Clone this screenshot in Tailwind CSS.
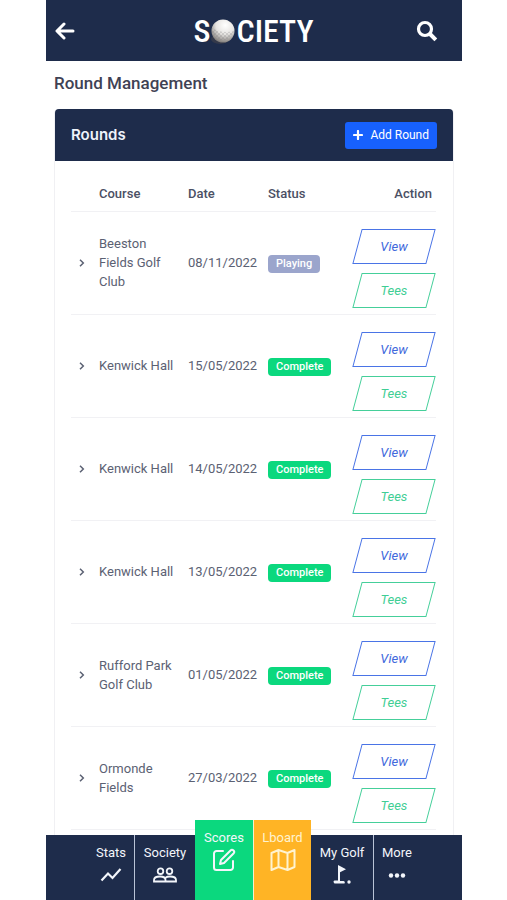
<!DOCTYPE html>
<html lang="en">
<head>
<meta charset="utf-8">
<meta name="viewport" content="width=device-width, initial-scale=1">
<title>Round Management</title>
<script src="https://cdn.jsdelivr.net/npm/@tailwindcss/browser@4"></script>
</head>
<body class="h-screen overflow-hidden bg-white pl-[46px] pr-[45px] font-[Roboto,sans-serif] text-[13px] text-[#5b6173]">
<div class="flex h-full flex-col">
  <header class="flex h-[61px] shrink-0 items-center justify-between bg-[#1e2c4b] pl-[9px] pr-6 text-white">
    <button type="button" aria-label="Back" class="w-9">
      <svg class="size-5" viewBox="0 0 20 20" fill="none" stroke="currentColor" stroke-width="3" stroke-linecap="round" stroke-linejoin="round"><path d="M9 3 2 10l7 7M2.500 10H18"/></svg>
    </button>
    <h1 class="flex items-center font-['Roboto_Condensed','Liberation_Sans_Narrow',sans-serif] text-[32px] leading-none font-medium">
      <span>S</span>
      <svg class="h-7 w-[26px]" viewBox="0 0 26 28" role="img" aria-label="O">
        <defs>
          <radialGradient id="ball" cx=".6" cy=".25" r=".8"><stop offset="0" stop-color="#fff"/><stop offset=".5" stop-color="#e6e4e1"/><stop offset="1" stop-color="#777370"/></radialGradient>
          <pattern id="dimples" width="4" height="4" patternUnits="userSpaceOnUse"><circle cx="1" cy="1" r=".8" fill="#77777a"/><circle cx="3" cy="3" r=".8" fill="#77777a"/></pattern>
        </defs>
        <ellipse cx="10" cy="22" rx="9" ry="5" fill="#34394a"/>
        <circle cx="13" cy="14" r="11.500" fill="url(#ball)"/>
        <path d="M2 11q10 6 22 3a11.500 11.500 0 0 1-22 2z" fill="url(#dimples)" opacity=".55"/>
      </svg>
      <span>CIETY</span>
    </h1>
    <button type="button" aria-label="Search" class="w-[22px]">
      <svg class="size-[22px]" viewBox="0 0 22 22" fill="none" stroke="currentColor" stroke-width="3.200"><circle cx="9" cy="9" r="6.500"/><path d="m13.500 13.500 6.300 6.300" stroke-width="4"/></svg>
    </button>
  </header>

  <main class="min-h-0 flex-1 overflow-y-auto px-2 [scrollbar-width:none]">
    <h2 class="pt-[10px] pb-[14px] text-[17px] leading-6 font-medium text-[#3f4254]">Round Management</h2>
    <section class="rounded border border-[#f0f0f3] pb-24">
      <div class="-mt-px flex h-[52px] items-center justify-between rounded-t bg-[#1e2c4b] px-4">
        <h3 class="font-[Inter,sans-serif] text-[15px] font-semibold text-[#eef3fb]">Rounds</h3>
        <button type="button" class="flex h-[27px] items-center gap-[7px] rounded-[3px] bg-[#1761fd] px-2 text-xs text-white">
          <svg class="size-[10px]" viewBox="0 0 10 10" stroke="currentColor" stroke-width="2.200" stroke-linecap="round"><path d="M5 1v8M1 5h8"/></svg>
          Add Round
        </button>
      </div>
      <div class="pl-4 pr-[17px]">
        <table class="w-full table-fixed text-left leading-[19px]">
          <colgroup><col class="w-7"><col class="w-[89px]"><col class="w-20"><col><col class="w-[84px]"></colgroup>
          <thead>
            <tr class="border-b border-[#f1f1f4] text-[#4b5064]">
              <td class="h-[50px]"></td>
              <th class="pt-4 font-medium">Course</th>
              <th class="pt-4 font-medium">Date</th>
              <th class="pt-4 font-medium">Status</th>
              <th class="pt-4 pr-1 text-right font-medium">Action</th>
            </tr>
          </thead>
          <tbody id="rounds"></tbody>
        </table>
      </div>
    </section>
  </main>

  <nav aria-label="Main" class="relative z-10 flex h-[65px] shrink-0 bg-[#1e2c4b] text-[#f3f6fb]">
    <a href="#" class="flex flex-1 justify-end pr-2 pt-2">
      <span class="flex flex-col items-center gap-1"><span class="leading-5">Stats</span>
      <svg class="h-4 w-[22px]" viewBox="0 0 22 16" fill="none" stroke="currentColor" stroke-width="2.200"><path d="m1.500 13.500 6.500-7 4.500 4.500 8-9"/></svg></span>
    </a>
    <a href="#" class="flex w-[61px] flex-col items-center gap-1 border-l border-[#b9c3d6] pt-2">
      <span class="leading-5">Society</span>
      <svg class="h-4 w-6" viewBox="0 0 24 16" fill="none" stroke="currentColor" stroke-width="1.800"><circle cx="7.500" cy="4.200" r="2.800"/><circle cx="16.500" cy="4.200" r="2.800"/><path d="M1 14.500V13c0-2.200 2.500-3.500 6-3.500s5.500 1.300 5.500 3.500v1.500zM12.500 14.500H23V13c0-2.200-2.500-3.500-6-3.500-2 0-3.500.4-4.500 1.200"/></svg>
    </a>
    <a href="#" class="-mt-[15px] flex w-[58px] flex-col items-center bg-[#0bd87e] pt-2">
      <span class="leading-5">Scores</span>
      <svg class="size-6" viewBox="0 0 24 24" fill="none" stroke="currentColor" stroke-width="2" stroke-linecap="round" stroke-linejoin="round"><path d="M11 3H4.500A2.500 2.500 0 0 0 2 5.500v14A2.500 2.500 0 0 0 4.500 22h14a2.500 2.500 0 0 0 2.500-2.500V13"/><path d="m9 12 9.500-9.500a1.800 1.800 0 0 1 3 3L12 15l-4 1z"/></svg>
    </a>
    <a href="#" class="-mt-[15px] flex w-[58px] flex-col items-center border-l border-[#f3efcf] bg-[#ffb425] pt-2 text-[#fff3d0]">
      <span class="leading-5">Lboard</span>
      <svg class="h-6 w-[26px]" viewBox="0 0 26 24" fill="none" stroke="currentColor" stroke-width="2" stroke-linejoin="round"><path d="m1.500 5 7-3 9 3 7-3v17l-7 3-9-3-7 3zM8.500 2v17M17.500 5v17"/></svg>
    </a>
    <a href="#" class="flex w-[62px] flex-col items-center gap-[2px] pt-2">
      <span class="leading-5">My Golf</span>
      <svg class="h-5 w-[18px]" viewBox="0 0 18 20" fill="currentColor"><path d="M5 0 13 4.200 7 7.200V16h3.500q2 .5 1 2.500H1.500Q-.5 16.500 1.500 15.500H5z"/><circle cx="16" cy="17" r="1.700"/></svg>
    </a>
    <a href="#" class="flex w-[89px] border-l border-[#b9c3d6] pl-2 pt-2">
      <span class="flex flex-col items-center gap-1"><span class="leading-5">More</span>
      <svg class="h-4 w-[18px]" viewBox="0 0 18 16" fill="currentColor"><circle cx="3" cy="8.500" r="2.200"/><circle cx="9" cy="8.500" r="2.200"/><circle cx="15" cy="8.500" r="2.200"/></svg></span>
    </a>
  </nav>
</div>

<template id="round-row">
  <tr class="border-b border-[#f1f1f4]">
    <td><button type="button" aria-label="Expand" class="ml-[7px] block">
      <svg class="size-2" viewBox="0 0 8 8" fill="none" stroke="currentColor" stroke-width="1.500"><path d="m2 .8 3.300 3.200L2 7.200"/></svg>
    </button></td>
    <td class="pr-2" data-f="course"></td>
    <td data-f="date"></td>
    <td><span data-f="status" class="mt-[2px] inline-block rounded px-2 align-middle text-[11px] leading-[18px] font-medium text-white"></span></td>
    <td class="pt-[17px] pb-[6px]">
      <div class="flex flex-col gap-[9px] italic">
        <button type="button" class="relative h-[35px] text-[#4169dc] before:absolute before:inset-x-[5px] before:inset-y-0 before:-skew-x-[15deg] before:border before:border-[#4a74e6]">View</button>
        <button type="button" class="relative h-[35px] text-[#3fce95] before:absolute before:inset-x-[5px] before:inset-y-0 before:-skew-x-[15deg] before:border before:border-[#45cf9a]">Tees</button>
      </div>
    </td>
  </tr>
</template>
<script>
  const rounds = [
    ['Beeston Fields Golf Club', '08/11/2022', 'Playing'],
    ['Kenwick Hall', '15/05/2022', 'Complete'],
    ['Kenwick Hall', '14/05/2022', 'Complete'],
    ['Kenwick Hall', '13/05/2022', 'Complete'],
    ['Rufford Park Golf Club', '01/05/2022', 'Complete'],
    ['Ormonde Fields', '27/03/2022', 'Complete'],
  ];
  const tpl = document.getElementById('round-row');
  for (const [course, date, status] of rounds) {
    const row = tpl.content.cloneNode(true);
    row.querySelector('[data-f=course]').textContent = course;
    row.querySelector('[data-f=date]').textContent = date;
    const badge = row.querySelector('[data-f=status]');
    badge.textContent = status;
    badge.classList.add(status === 'Playing' ? 'bg-[#9ba5cc]' : 'bg-[#0bd87e]');
    document.getElementById('rounds').append(row);
  }
</script>
</body>
</html>
